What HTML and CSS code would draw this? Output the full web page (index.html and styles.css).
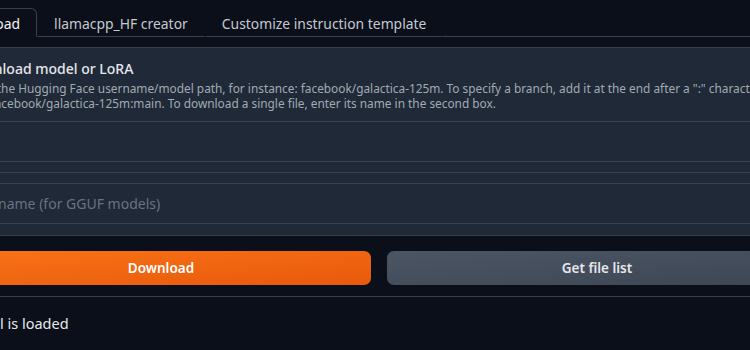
FILE: index.html
```html
<!DOCTYPE html>
<html lang="en">
<head>
  <meta charset="UTF-8">
  <title>Model - Download</title>
  <link rel="stylesheet" href="styles.css">
</head>
<body>
  <div class="page">
    <!-- tabs -->
    <div class="tabs">
      <button class="tab active">Download</button>
      <button class="tab">llamacpp_HF creator</button>
      <button class="tab">Customize instruction template</button>
      <div class="tab-fill"></div>
    </div>

    <div class="tab-body">
      <div class="panel">
        <div class="md">
          <div class="md-title">Download model or LoRA</div>
          <div class="md-text">Enter the Hugging Face username/model path, for instance: facebook/galactica-125m. To specify a branch, add it at the end after a ":" character like this: facebook/galactica-125m:main. To download a single file, enter its name in the second box.</div>
        </div>
        <div class="row field"><input type="text" class="box"></div>
        <div class="row thin"></div>
        <div class="row thin"></div>
        <div class="row field"><input type="text" class="box" placeholder="File name (for GGUF models)"></div>
        <div class="row thin last"></div>
      </div>

      <div class="buttons">
        <button class="btn primary">Download</button>
        <button class="btn secondary">Get file list</button>
      </div>

      <div class="status">No model is loaded</div>
    </div>
  </div>
</body>
</html>
```

FILE: styles.css
```css
/* base */
body {
  margin: 0;
  background-color: #0b0f19;
  color: #e5e7eb;
  font-family: "Noto Sans", "Open Sans", sans-serif;
  overflow: hidden;
  height: 350px;
}
.page {
  width: 856px;
  margin-left: -49px;
}
/* tabs */
.tabs {
  display: flex;
  align-items: flex-end;
  padding-top: 8px;
  margin-left: -14px;
}
.tab {
  height: 29px;
  padding: 2px 16px 0;
  font-family: inherit;
  font-size: 13.9px;
  color: #c4c9d2;
  background: transparent;
  border: 1px solid transparent;
  border-bottom: 1px solid #374151;
  border-radius: 6px 6px 0 0;
  cursor: pointer;
}
.tab.active {
  color: #f3f4f6;
  border-color: #374151;
  border-bottom-color: transparent;
}
.tab-fill {
  flex: 1;
  border-bottom: 1px solid #374151;
  margin-right: -200px;
}
.tab-body {
  padding-top: 10px;
}
/* panel */
.panel {
  background-color: #1f2937;
  border: 1px solid #374151;
  border-radius: 6px;
}
.md {
  height: 74px;
  padding: 11px 12px 0;
  box-sizing: border-box;
  border-bottom: 1px solid #374151;
}
.md-title {
  font-size: 14px;
  font-weight: 500;
  color: #e5e7eb;
  line-height: 20px;
}
.md-text {
  margin-top: 2px;
  font-size: 11.85px;
  line-height: 15px;
  color: #a3a9b3;
}
.row {
  border-bottom: 1px solid #374151;
}
.row.last {
  border-bottom: none;
}
.field {
  height: 39px;
}
.thin {
  height: 10px;
}
.thin.last {
  height: 11px;
}
.box {
  width: 100%;
  height: 100%;
  box-sizing: border-box;
  padding: 0 20px;
  background: transparent;
  border: none;
  outline: none;
  font-family: inherit;
  font-size: 14px;
  color: #e5e7eb;
}
.box::placeholder {
  color: #6b7280;
}
/* buttons */
.buttons {
  display: flex;
  gap: 16px;
  margin-top: 15px;
  padding-bottom: 11px;
  border-bottom: 1px solid #374151;
}
.btn {
  flex: 1;
  height: 34px;
  font-family: inherit;
  font-size: 13.5px;
  font-weight: 600;
  color: #fff;
  border: none;
  border-radius: 7px;
  cursor: pointer;
}
.btn.primary {
  background: linear-gradient(to bottom right, #f97316, #e8590c);
}
.btn.secondary {
  background: linear-gradient(to bottom right, #4b5563, #3d4654);
  color: #e5e7eb;
}
.status {
  margin-top: 16px;
  margin-left: -14px;
  font-size: 14.5px;
  color: #e5e7eb;
}
```
